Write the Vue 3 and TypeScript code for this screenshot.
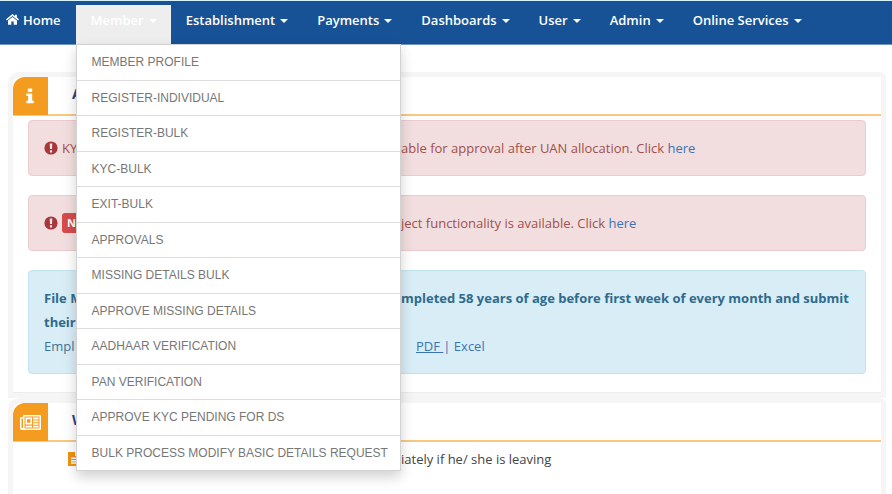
<script setup lang="ts">
interface NavItem {
  label: string
  open?: boolean
}

const navItems: NavItem[] = [
  { label: 'Member', open: true },
  { label: 'Establishment' },
  { label: 'Payments' },
  { label: 'Dashboards' },
  { label: 'User' },
  { label: 'Admin' },
  { label: 'Online Services' },
]

const memberMenu: string[] = [
  'MEMBER PROFILE',
  'REGISTER-INDIVIDUAL',
  'REGISTER-BULK',
  'KYC-BULK',
  'EXIT-BULK',
  'APPROVALS',
  'MISSING DETAILS BULK',
  'APPROVE MISSING DETAILS',
  'AADHAAR VERIFICATION',
  'PAN VERIFICATION',
  'APPROVE KYC PENDING FOR DS',
  'BULK PROCESS MODIFY BASIC DETAILS REQUEST',
]
</script>

<template>
  <div class="page">
    <nav class="navbar">
      <a class="nav-link home" href="#">
        <svg class="home-icon" viewBox="0 0 13 11" aria-hidden="true">
          <path d="M6.500 2.900 2 6.600v3.600q0 .6.600.600h2.700V7.500h2.400v3.300h2.700q.6 0 .6-.6V6.600z" />
          <path d="M6.500 0 9 2V.7h1.900v2.900L13 5.300l-.9 1.100L6.500 1.900.900 6.400 0 5.300z" />
        </svg>
        <span>Home</span>
      </a>
      <div v-for="item in navItems" :key="item.label" class="nav-item">
        <button type="button" class="nav-link" :class="{ open: item.open }" :aria-expanded="!!item.open">
          <span>{{ item.label }}</span>
          <span class="caret"></span>
        </button>
        <ul v-if="item.open" class="menu">
          <li v-for="entry in memberMenu" :key="entry">
            <a href="#">{{ entry }}</a>
          </li>
        </ul>
      </div>
    </nav>

    <main class="content">
      <section class="panel">
        <header class="panel-head">
          <span class="panel-icon">
            <svg class="info-icon" viewBox="0 0 9 16" aria-hidden="true">
              <path d="M2.400.5h3.200q.6 0 .6.600v2.300q0 .6-.6.600H2.400q-.6 0-.6-.6V1.100q0-.6.600-.6zM.9 5.500h4.700q.6 0 .6.600v6.700h1.200q.6 0 .6.600v1.200q0 .6-.6.600H.9q-.6 0-.6-.6v-1.200q0-.6.600-.6h1.200V7.900H.9q-.6 0-.6-.6V6.100q0-.6.600-.6z" />
            </svg>
          </span>
          <h2>A</h2>
        </header>
        <div class="panel-body alerts">
          <div class="alert danger">
            <p class="split">
              <span class="lead">
                <svg class="bang" viewBox="0 0 14 14" aria-hidden="true">
                  <circle cx="7" cy="7" r="6.600" />
                  <path d="M5.700 2.600h2.600l-.3 5.500H6zM5.900 9.200h2.200v2.200H5.900z" />
                </svg>
                <span>KY</span>
              </span>
              <span>able for approval after UAN allocation. Click <a href="#">here</a></span>
            </p>
          </div>
          <div class="alert danger">
            <p class="split">
              <span class="lead">
                <svg class="bang" viewBox="0 0 14 14" aria-hidden="true">
                  <circle cx="7" cy="7" r="6.600" />
                  <path d="M5.700 2.600h2.600l-.3 5.500H6zM5.900 9.200h2.200v2.200H5.900z" />
                </svg>
                <span class="badge">N</span>
              </span>
              <span>ject functionality is available. Click <a href="#">here</a></span>
            </p>
          </div>
          <div class="alert info">
            <p class="split strong">
              <span>File M</span>
              <span>mpleted 58 years of age before first week of every month and submit</span>
            </p>
            <p class="strong">their</p>
            <p class="split">
              <span>Empl</span>
              <span class="downloads"><a class="underlined" href="#">PDF </a><a href="#">| Excel</a></span>
            </p>
          </div>
        </div>
      </section>

      <section class="panel news">
        <header class="panel-head">
          <span class="panel-icon">
            <svg class="news-icon" viewBox="0 0 21 15" aria-hidden="true">
              <path fill-rule="evenodd" d="M4 0h16q1 0 1 1v12.500q0 1.500-1.500 1.500h-17Q0 15 0 12.500V3q0-1 1-1h2V1q0-1 1-1zM1.500 3.500v9q0 .8.700.8T3 12.500v-9zM4.500 1.500v12h14.300q.7 0 .7-.7V1.500z" />
              <path fill-rule="evenodd" d="M5.500 2.600h6.500v6.800H5.500zM7 4.200v3.600h3.500V4.200zM13 2.600h5.500v1.900H13zM13 5.500h5.500v1.800H13zM13 8.300h5.500v1.500H13zM5.500 10.800H12v1.700H5.500zM13 10.800h5.500v1.700H13z" />
            </svg>
          </span>
          <h2>W</h2>
        </header>
        <div class="panel-body">
          <p class="split news-row">
            <span class="lead">
              <svg class="note-icon" viewBox="0 0 14 14" aria-hidden="true">
                <path class="sheet" d="M0 0h7v4h7v10H0z" />
                <path class="lines" d="M3 5.500h8v1.500H3zM3 8h8v1.500H3zM3 10.300h8v1.500H3z" />
              </svg>
            </span>
            <span>iately if he/ she is leaving</span>
          </p>
        </div>
      </section>
    </main>
  </div>
</template>

<style>
body {
  margin: 0;
  background: #fff;
}
</style>

<style scoped>
.page {
  display: flex;
  flex-direction: column;
  min-height: 100vh;
  font: 13px/24px 'Segoe UI', 'Open Sans', 'Noto Sans', sans-serif;
  color: #444;
}

a {
  color: #3a74b4;
  text-decoration: none;
}

p,
h2,
ul {
  margin: 0;
  padding: 0;
}

.navbar {
  display: flex;
  align-items: stretch;
  height: 39px;
  padding-top: 4px;
  background: #175296;
  border-top: 1px solid #d5f3f8;
  border-bottom: 1px solid #6f94c3;
}

.nav-item {
  position: relative;
  display: flex;
}

.nav-link {
  display: flex;
  align-items: center;
  gap: 5px;
  box-sizing: border-box;
  height: 39px;
  padding: 0 14px 10px 15px;
  border: 0;
  background: transparent;
  color: #fff;
  font: 600 13px/20px 'Segoe UI', 'Open Sans', 'Noto Sans', sans-serif;
  white-space: nowrap;
}

.nav-link.home {
  gap: 4px;
  padding-right: 15px;
  padding-left: 6px;
}

.nav-link.open {
  background: #eee;
}

.home-icon {
  width: 13px;
  height: 11px;
  fill: #fff;
}

.caret {
  margin-top: 3px;
  border: 4px solid transparent;
  border-top-color: currentColor;
  border-bottom: 0;
}

.menu {
  position: absolute;
  top: 39px;
  left: 0;
  z-index: 10;
  display: flex;
  flex-direction: column;
  box-sizing: border-box;
  height: 427px;
  border: 1px solid #d2d2d2;
  background: #fff;
  box-shadow: 0 6px 12px rgba(0, 0, 0, 0.18);
  list-style: none;
}

.menu li {
  display: flex;
  flex: 1;
  align-items: center;
  padding: 0 12px 0 15px;
  border-bottom: 1px solid #ddd;
}

.menu li:last-child {
  border-bottom: 0;
}

.menu a {
  color: #777;
  font: 12px/20px 'Liberation Sans', Arial, sans-serif;
  white-space: nowrap;
}

.content {
  display: flex;
  flex: 1;
  flex-direction: column;
  margin: 27px 6px 0 8px;
}

.panel {
  border: 5px solid #f5f5f5;
  border-radius: 12px 6px 0 0;
  background: #fff;
}

.panel.news {
  flex: 1;
  border-bottom: 0;
}

.panel-head {
  display: flex;
  height: 37px;
  border-bottom: 2px solid #f8c880;
}

.panel-icon {
  display: flex;
  align-items: center;
  justify-content: center;
  width: 35px;
  height: 38px;
  border-radius: 12px 0 0 0;
  background: #f39c1f;
}

.panel-icon svg {
  fill: #fff;
}

.info-icon {
  width: 9px;
  height: 16px;
}

.news-icon {
  width: 21px;
  height: 15px;
}

.panel-head h2 {
  padding: 4px 0 0 24px;
  color: #2b3f86;
  font-size: 14px;
  line-height: 26px;
}

.alerts {
  display: flex;
  flex-direction: column;
  gap: 19px;
  padding: 4px 15px 18px;
  border-bottom: 1px solid #ececec;
}

.alert {
  padding: 15px;
  border: 1px solid;
  border-radius: 4px;
}

.danger {
  border-color: #ebccd1;
  background: #f2dede;
  color: #a0504e;
}

.info {
  border-color: #c3e4ef;
  background: #d9edf7;
  color: #3a7596;
}

.split {
  display: grid;
  grid-template-columns: 357px 1fr;
  white-space: nowrap;
}

.strong {
  color: #2f6b8c;
  font-weight: 700;
}

.lead {
  display: flex;
  align-items: center;
  gap: 4px;
}

.bang {
  width: 14px;
  height: 14px;
  fill: #a5383a;
}

.bang path {
  fill: #f7e3e3;
}

.badge {
  padding: 0 5px;
  border-radius: 3px;
  background: #d64b4b;
  color: #fff;
  font-size: 11px;
  font-weight: 700;
  line-height: 20px;
}

.downloads {
  padding-left: 15px;
}

.underlined {
  text-decoration: underline;
  white-space: pre;
}

.news-row {
  padding: 5px 0 0 31px;
}

.news-row .lead {
  padding-left: 24px;
}

.note-icon {
  width: 14px;
  height: 14px;
}

.sheet {
  fill: #f0930f;
}

.lines {
  fill: #fff;
}
</style>
